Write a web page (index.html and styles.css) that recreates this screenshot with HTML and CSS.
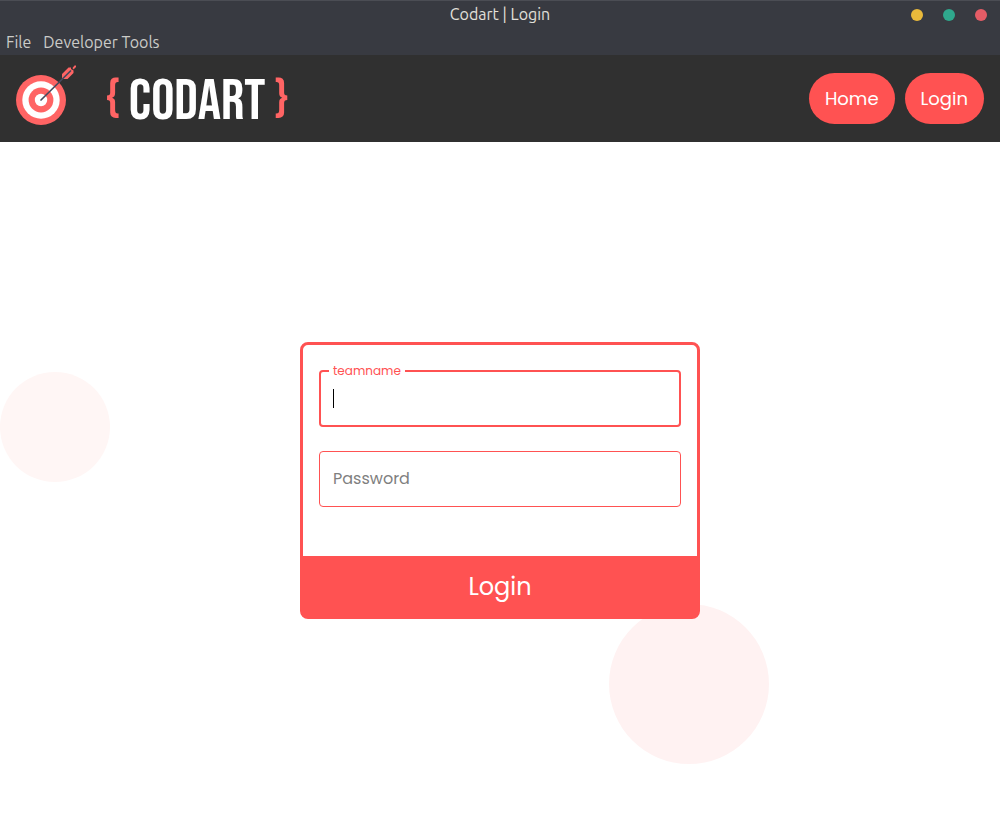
FILE: index.html
```html
<!DOCTYPE html>
<html lang="en">
<head>
<meta charset="utf-8">
<title>Codart | Login</title>
<link rel="stylesheet" href="styles.css">
</head>
<body>
<div class="titlebar">
  <span class="title">Codart | Login</span>
  <div class="controls">
    <button class="dot minimize" type="button" aria-label="Minimize"></button>
    <button class="dot maximize" type="button" aria-label="Maximize"></button>
    <button class="dot close" type="button" aria-label="Close"></button>
  </div>
</div>
<div class="menubar">
  <button type="button">File</button>
  <button type="button">Developer Tools</button>
</div>
<header class="header">
  <a class="brand" href="#">
    <svg class="target" viewBox="0 0 62 62" aria-hidden="true">
      <circle cx="25" cy="35" r="25" fill="#ff6464"/>
      <circle cx="25" cy="35" r="18.7" fill="#fff"/>
      <circle cx="25" cy="35" r="12.4" fill="#ff6464"/>
      <circle cx="25" cy="35" r="6.2" fill="#fff"/>
      <path d="M46 14V9L52.500 2.500 55 2.500 55 4 57.500 5.500 57.500 8 51.500 14Z" fill="#ff6464"/>
      <path d="M56.500 3L58.500 .5 60 .5 60 2 57.500 4.500Z" fill="#ff6464"/>
      <path d="M25 35L54.500 6" stroke="#45495d" stroke-width="1.700" stroke-linecap="round"/>
    </svg>
    <span class="wordmark"><span class="brace">{</span><span class="name">CODART</span><span class="brace">}</span></span>
  </a>
  <nav class="nav">
    <a href="#">Home</a>
    <a href="#">Login</a>
  </nav>
</header>
<main class="main">
  <div class="bubble bubble-left"></div>
  <div class="bubble bubble-right"></div>
  <form class="card">
    <div class="fields">
      <div class="field focused">
        <label for="team">teamname</label>
        <input id="team" type="text">
        <span class="caret"></span>
      </div>
      <div class="field">
        <input id="password" type="password" placeholder="Password" aria-label="Password">
      </div>
    </div>
    <button class="submit" type="submit">Login</button>
  </form>
</main>
</body>
</html>
```
FILE: styles.css
```css
* { box-sizing: border-box; }
body {
  margin: 0;
  min-height: 100vh;
  display: flex;
  flex-direction: column;
  background: #fff;
  font-family: Poppins, Inter, sans-serif;
}
button { border: 0; font: inherit; cursor: pointer; }

.titlebar {
  display: grid;
  grid-template-columns: 1fr auto 1fr;
  align-items: center;
  height: 30px;
  padding: 0 13px 2px;
  background: #383a41;
  border-top: 1px solid #4b4d54;
  color: #e2e0db;
  font: 16px Ubuntu, "Noto Sans", sans-serif;
}
.title { grid-column: 2; padding-bottom: 2px; }
.controls { display: flex; justify-content: flex-end; gap: 20px; }
.dot { width: 12px; height: 12px; padding: 0; border-radius: 50%; }
.minimize { background: #e9b93b; }
.maximize { background: #2fa88d; }
.close { background: #e55c66; }

.menubar {
  display: flex;
  align-items: center;
  gap: 12px;
  height: 25px;
  padding: 0 6px 1px;
  background: #383a41;
  font: 16px Ubuntu, "Noto Sans", sans-serif;
}
.menubar button { padding: 0; background: none; color: #cbcbc8; }

.header {
  display: flex;
  align-items: center;
  justify-content: space-between;
  height: 87px;
  padding: 0 16px;
  background: #303030;
}
.brand { display: flex; align-items: center; gap: 28px; padding-bottom: 6px; text-decoration: none; }
.target { width: 62px; height: 62px; fill: none; }
.wordmark {
  display: flex;
  align-items: center;
  gap: 9px;
  padding-top: 8px;
  font: 58px/60px "Bebas Neue", "Roboto Condensed", Roboto, sans-serif;
}
.name { color: #fff; padding-top: 4px; }
.brace { color: #ff6464; font-size: 50px; }
.nav { display: flex; gap: 10px; }
.nav a {
  padding: 12px 16px;
  border-radius: 26px;
  background: #ff5252;
  color: #fff;
  font-size: 18px;
  line-height: 27px;
  text-decoration: none;
}

.main {
  position: relative;
  flex: 1;
  display: flex;
  align-items: center;
  justify-content: center;
  padding-bottom: 11px;
  overflow: hidden;
}
.bubble { position: absolute; border-radius: 50%; }
.bubble-left { left: 0; top: 230px; width: 110px; height: 110px; background: #fff6f5; }
.bubble-right { left: 609px; top: 462px; width: 160px; height: 160px; background: #fff2f2; }
.card {
  position: relative;
  width: 400px;
  border: 3px solid #ff5252;
  border-radius: 8px;
  background: #fff;
}
.fields {
  display: flex;
  flex-direction: column;
  gap: 24px;
  padding: 25px 16px 49px;
}
.field { position: relative; display: flex; }
.field input {
  width: 100%;
  height: 56px;
  padding: 0 13px 2px;
  border: 1px solid #ff5252;
  border-radius: 4px;
  background: #fff;
  font: 16px Poppins, Inter, sans-serif;
  outline: none;
}
.field input::placeholder { color: #7f7f7f; }
.focused input { height: 57px; border-width: 2px; caret-color: transparent; }
.focused label {
  position: absolute;
  left: 10px;
  top: -8px;
  padding: 0 4px;
  background: #fff;
  color: #ff5252;
  font-size: 12px;
  line-height: 18px;
}
.caret {
  position: absolute;
  left: 14px;
  top: 19px;
  width: 1px;
  height: 19px;
  background: #000;
}
.submit {
  display: block;
  width: 100%;
  height: 60px;
  background: #ff5252;
  color: #fff;
  font-size: 24px;
}
```
